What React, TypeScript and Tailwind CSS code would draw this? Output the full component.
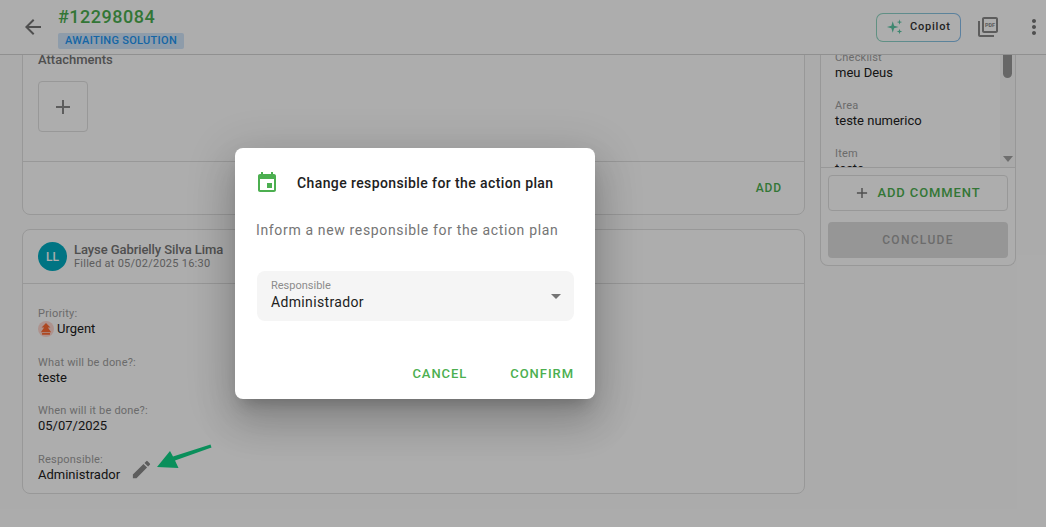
import React from 'react';

const Mui: React.FC<{ d: string; className?: string }> = ({ d, className }) => (
  <svg viewBox="0 0 24 24" fill="currentColor" className={className}>
    <path d={d} />
  </svg>
);

const ARROW_BACK = 'M20 11H7.83l5.59-5.59L12 4l-8 8 8 8 1.41-1.41L7.83 13H20v-2z';
const PLUS = 'M19 13h-6v6h-2v-6H5v-2h6V5h2v6h6v2z';
const EVENT =
  'M17 12h-5v5h5v-5zM16 1v2H8V1H6v2H5c-1.11 0-1.99.9-1.99 2L3 19c0 1.1.89 2 2 2h14c1.1 0 2-.9 2-2V5c0-1.1-.9-2-2-2h-1V1h-2zm3 18H5V8h14v11z';
const EDIT =
  'M3 17.25V21h3.75L17.81 9.94l-3.75-3.75L3 17.25zM20.71 7.04c.39-.39.39-1.02 0-1.41l-2.34-2.34a.9959.9959 0 0 0-1.41 0l-1.83 1.83 3.75 3.75 1.83-1.83z';
const MORE =
  'M12 8c1.1 0 2-.9 2-2s-.9-2-2-2-2 .9-2 2 .9 2 2 2zm0 2c-1.1 0-2 .9-2 2s.9 2 2 2 2-.9 2-2-.9-2-2-2zm0 6c-1.1 0-2 .9-2 2s.9 2 2 2 2-.9 2-2-.9-2-2-2z';
const PDF_FRAME =
  'M20 2H8c-1.1 0-2 .9-2 2v12c0 1.1.9 2 2 2h12c1.1 0 2-.9 2-2V4c0-1.1-.9-2-2-2zm0 14H8V4h12v12zM4 6H2v14c0 1.1.9 2 2 2h14v-2H4V6z';

const Field: React.FC<{ label: string; children: React.ReactNode }> = ({ label, children }) => (
  <div>
    <p className="text-[11px] leading-[13px] tracking-[0.2px] text-[#9e9e9e]">{label}</p>
    <div className="text-[13px] leading-[18px] text-[#212121]">{children}</div>
  </div>
);

const Header = () => (
  <header className="flex h-[55px] shrink-0 items-center border-b border-[#d4d4d4] bg-white pl-[21px] pr-0">
    <Mui d={ARROW_BACK} className="h-6 w-6 text-[#757575]" />
    <div className="ml-[13px] mt-[2px]">
      <h1 className="text-[18px] font-medium leading-[21px] tracking-[0.5px] text-[#4caf50] -mt-[1px]">#12298084</h1>
      <span className="mt-[6px] block w-[126px] rounded-[2px] bg-[#d2e6fb] text-center text-[11px] font-medium leading-[16px] tracking-[0.3px] text-[#2196f3]">
        AWAITING SOLUTION
      </span>
    </div>
    <div className="ml-auto flex items-center">
      <div className="rounded-[7px] bg-gradient-to-r from-[#8fd6c0] to-[#86bdec] p-px">
        <div className="flex h-[27px] w-[83px] items-center rounded-[6px] bg-white pl-[9px]">
          <svg viewBox="0 0 20 20" className="h-[18px] w-[18px] text-[#5cc7a6]" fill="currentColor">
            <path d="M7.5 3.5 9 8.5l5 1.5-5 1.5-1.500 5-1.500-5-5-1.500 5-1.500z" />
            <path d="M15 1.500l.7 2.300 2.300.7-2.300.7-.7 2.300-.7-2.300-2.300-.7 2.300-.7zM15 12l.7 2.300 2.300.7-2.300.7-.7 2.300-.7-2.300-2.300-.7 2.300-.7z" />
          </svg>
          <span className="ml-[6px] text-[11px] font-medium tracking-[0.8px] text-[#333333]">Copilot</span>
        </div>
      </div>
      <svg viewBox="0 0 24 24" className="ml-[15px] h-6 w-6 text-[#8a8a8a]" fill="currentColor">
        <path d={PDF_FRAME} />
        <text x="14" y="12" textAnchor="middle" fontSize="5.500" fontWeight="700" fontFamily="Roboto, sans-serif">
          PDF
        </text>
      </svg>
      <Mui d={MORE} className="ml-[22px] mr-0 h-6 w-6 text-[#757575]" />
    </div>
  </header>
);

const LeftColumn = () => (
  <div className="flex w-[783px] shrink-0 flex-col gap-[14px]">
    <section className="rounded-[8px] border border-[#e0e0e0] bg-white -mt-[22px]">
      <div className="px-[15px] pt-[17px]">
        <p className="text-[13px] font-medium leading-[18px] text-[#757575]">Attachments</p>
        <div className="mt-[12px] flex h-[51px] w-[50px] items-center justify-center rounded-[4px] border border-[#e0e0e0]">
          <Mui d={PLUS} className="h-6 w-6 text-[#8a8a8a]" />
        </div>
      </div>
      <div className="mt-[29px] flex h-[53px] items-center justify-end border-t border-[#e0e0e0] pr-[22px]">
        <span className="text-[12px] font-medium tracking-[0.9px] text-[#4caf50]">ADD</span>
      </div>
    </section>
    <section className="rounded-[8px] border border-[#e0e0e0] bg-white">
      <div className="flex h-[54px] items-center gap-[7px] border-b border-[#e0e0e0] px-[15px]">
        <div className="flex h-[29px] w-[29px] items-center justify-center rounded-full bg-[#00acc1] text-[12px] font-medium text-white">
          LL
        </div>
        <div>
          <p className="text-[13px] font-medium leading-[14px] tracking-[-0.08px] text-[#757575]">Layse Gabrielly Silva Lima</p>
          <p className="text-[11px] leading-[13px] tracking-[0.25px] text-[#8a8a8a]">Filled at 05/02/2025 16:30</p>
        </div>
      </div>
      <div className="flex flex-col gap-[17.6px] px-[15px] pb-[9px] pt-[23px]">
        <Field label="Priority:">
          <span className="flex items-center gap-[3px]">
            <span className="flex h-4 w-4 items-center justify-center rounded-full bg-[#ffd8d0]">
              <svg viewBox="0 0 12 12" className="h-[14px] w-[14px] text-[#ff6a33]" fill="currentColor">
                <path d="M6 .8 9.800 4.800H7.600L10.400 8.700H1.600L4.400 4.800H2.200zM2.600 9.500h6.800V11H2.600z" />
              </svg>
            </span>
            Urgent
          </span>
        </Field>
        <Field label="What will be done?:">teste</Field>
        <Field label="When will it be done?:">05/07/2025</Field>
        <Field label="Responsible:">
          <span className="flex items-start gap-[10px]">
            Administrador
            <Mui d={EDIT} className="-mt-[8px] h-[23px] w-[23px] text-[#8a8a8a]" />
          </span>
        </Field>
      </div>
    </section>
  </div>
);

const RightColumn = () => (
  <aside className="w-[196px] shrink-0 rounded-b-[8px] border border-t-0 border-[#e0e0e0] bg-white">
    <div className="relative h-[113px] overflow-hidden border-b border-[#e0e0e0] pl-[14px]">
      <div className="flex flex-col gap-[17px] -mt-[4px]">
        <Field label="Checklist">meu Deus</Field>
        <Field label="Area">teste numerico</Field>
        <Field label="Item">teste</Field>
      </div>
      <div className="absolute right-0 top-0 flex h-full w-[15px] flex-col items-center bg-[#fafafa]">
        <div className="h-[23px] w-[9px] rounded-b-[5px] bg-[#999999]" />
        <div className="mt-auto mb-[5px] h-0 w-0 border-x-[5px] border-t-[6px] border-x-transparent border-t-[#a3a3a3]" />
      </div>
    </div>
    <div className="flex flex-col gap-[11px] px-[7px] pb-[7px] pt-[7px]">
      <div className="flex h-[36px] items-center justify-center gap-[8px] rounded-[4px] border border-[#e0e0e0]">
        <Mui d={PLUS} className="h-[14px] w-[14px] scale-125 text-[#757575]" />
        <span className="text-[13px] font-medium tracking-[0.9px] text-[#4caf50]">ADD COMMENT</span>
      </div>
      <div className="flex h-[36px] items-center justify-center rounded-[4px] bg-[#dedede]">
        <span className="text-[12px] font-medium tracking-[1.3px] text-[#a0a0a0]">CONCLUDE</span>
      </div>
    </div>
  </aside>
);

const Dialog = () => (
  <div className="absolute left-[235px] top-[148px] h-[251px] w-[360px] rounded-[8px] bg-white shadow-[0_11px_15px_-7px_rgba(0,0,0,0.2),0_24px_38px_3px_rgba(0,0,0,0.14),0_9px_46px_8px_rgba(0,0,0,0.12)]">
    <div className="flex items-center pl-[20px] pt-[23px]">
      <Mui d={EVENT} className="h-6 w-6 text-[#4caf50]" />
      <h2 className="ml-[18px] text-[14px] font-medium tracking-[0.4px] text-[#212121]">
        Change responsible for the action plan
      </h2>
    </div>
    <p className="ml-[21px] mt-[25px] text-[14px] leading-[20px] tracking-[0.65px] text-[#757575]">
      Inform a new responsible for the action plan
    </p>
    <div className="relative ml-[22px] mt-[31px] h-[50px] w-[317px] rounded-[8px] bg-[#f5f5f5] pl-[14px] pt-[8px]">
      <p className="text-[11px] leading-[13px] text-[#8c8c8c]">Responsible</p>
      <p className="text-[14px] leading-[20px] tracking-[0.35px] text-[#212121]">Administrador</p>
      <div className="absolute right-[13px] top-[23px] h-0 w-0 border-x-[5px] border-t-[5px] border-x-transparent border-t-[#757575]" />
    </div>
    <div className="mr-[21px] mt-[44px] flex justify-end gap-[43px] text-[13px] font-medium leading-[18px] tracking-[0.95px] text-[#4caf50]">
      <span>CANCEL</span>
      <span>CONFIRM</span>
    </div>
  </div>
);

export default function App() {
  return (
    <div className="relative flex h-[527px] w-[1046px] flex-col overflow-hidden bg-[#fdfdfd] font-['Roboto',sans-serif]">
      <Header />
      <main className="flex min-h-0 flex-1 items-start gap-[15px] overflow-hidden pl-[22px]">
        <LeftColumn />
        <RightColumn />
      </main>
      <div className="absolute inset-0 bg-black/32" />
      <Dialog />
      <svg viewBox="0 0 60 30" className="absolute left-[155px] top-[442px] h-[30px] w-[60px] text-[#0a8f5b]" fill="currentColor">
        <path d="M2 25 15 9 18 14.500 55.500 2.500 56.500 5.500 20 18.500 23.500 26z" />
      </svg>
    </div>
  );
}
